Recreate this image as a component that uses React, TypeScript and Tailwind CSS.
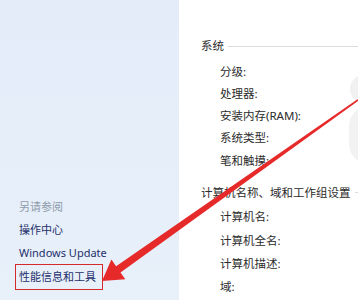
export default function App() {
  const font = { fontFamily: '"Noto Sans", "Noto Sans CJK SC", sans-serif' };

  const system = ["分级:", "处理器:", "安装内存(RAM):", "系统类型:", "笔和触摸:"];
  const computer = ["计算机名:", "计算机全名:", "计算机描述:", "域:"];

  return (
    <div className="relative flex h-[300px] w-[358px] overflow-hidden bg-white" style={font}>
      {/* left task pane */}
      <div className="flex w-[179px] shrink-0 flex-col bg-gradient-to-b from-[#e3ecf8] to-[#e8f0fa] pl-[19px] pt-[196px] text-[11px]">
        <div className="flex h-[23px] items-center text-[#8f9cab]">另请参阅</div>
        <div className="flex h-[23px] items-center text-[#1f2f6b]">操作中心</div>
        <div className="flex h-[23px] items-center text-[#1f2f6b]">Windows Update</div>
        <div className="mt-[-1px] flex h-[26px] w-[88px] items-center border-[1.5px] border-[#d62a2a] -ml-[4px] pl-[3px] text-[#1f2f6b]">
          性能信息和工具
        </div>
      </div>

      {/* right content */}
      <div className="flex flex-1 flex-col pl-[22px] pt-[35px] text-[11.5px] text-[#2b2b2b]">
        <div className="flex h-[22px] items-center gap-[4px]">
          <span>系统</span>
          <div className="h-px flex-1 bg-[#dcdcdc]" />
        </div>
        <div className="mt-[3px] flex flex-col pl-[19px]">
          {system.map((s) => (
            <div key={s} className="flex h-[22.25px] items-center">
              {s}
            </div>
          ))}
        </div>
        <div className="mt-[10px] flex h-[22px] items-center gap-[4px]">
          <span>计算机名称、域和工作组设置</span>
          <div className="h-px flex-1 bg-[#dcdcdc]" />
        </div>
        <div className="mt-[2px] flex flex-col pl-[19px]">
          {computer.map((s) => (
            <div key={s} className="flex h-[23.3px] items-center">
              {s}
            </div>
          ))}
        </div>
      </div>

      {/* faint shape at right edge */}
      <div className="pointer-events-none absolute left-[350px] top-[75px] h-[28px] w-[20px] rounded-l-full bg-[#f1f1f1]" />
      <div className="pointer-events-none absolute left-[349px] top-[106px] h-[58px] w-[20px] rounded-l-full bg-[#f2f2f2]" />

      {/* red arrow */}
      <svg
        className="pointer-events-none absolute left-0 top-0"
        width="358"
        height="300"
        viewBox="0 0 358 300"
      >
        <polygon
          points="357.5,99.3 116.1,266.3 111.4,259.6 102,281 125.3,279.2 120.5,272.5 358.5,100.7"
          fill="#e62a2a"
        />
      </svg>
    </div>
  );
}
